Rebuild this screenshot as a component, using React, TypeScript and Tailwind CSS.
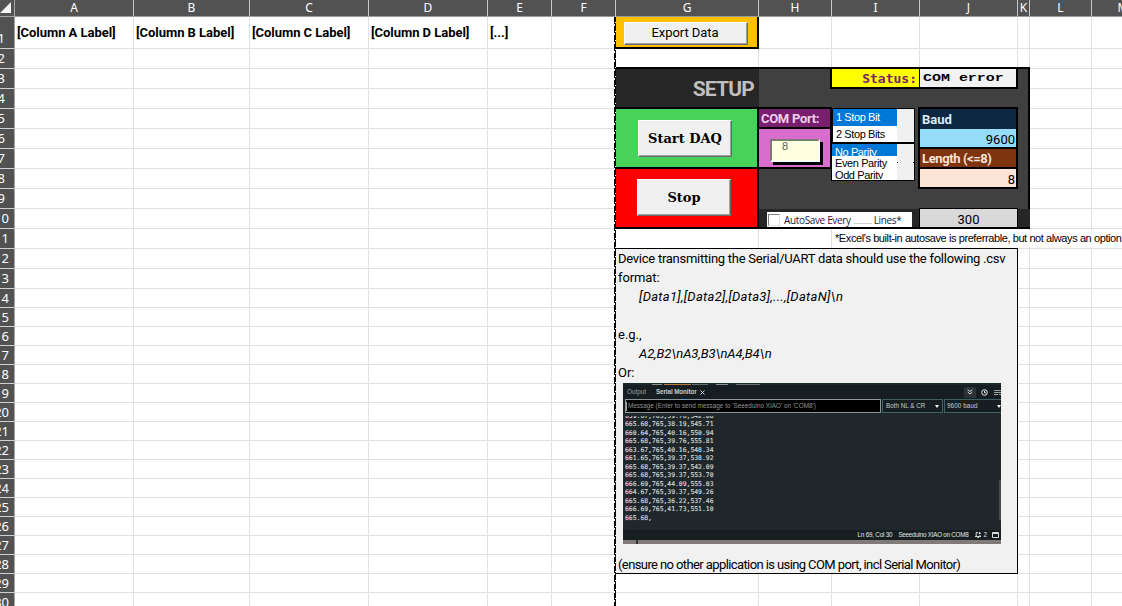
import React from "react";

const COLS = ["A", "B", "C", "D", "E", "F", "G", "H", "I", "J", "K", "L", "M"];
const ROWS = Array.from({ length: 30 }, (_, i) => i + 1);
const LABELS = ["[Column A Label]", "[Column B Label]", "[Column C Label]", "[Column D Label]", "[...]"];
const LOG = [
  "665.68,765,38.19,545.71",
  "660.64,765,40.16,550.94",
  "665.68,765,39.76,555.81",
  "663.67,765,40.16,548.34",
  "661.65,765,39.37,538.92",
  "665.68,765,39.37,542.09",
  "665.68,765,39.37,553.70",
  "666.69,765,44.09,555.03",
  "664.67,765,39.37,549.26",
  "665.68,765,36.22,537.46",
  "666.69,765,41.73,551.10",
  "665.68,",
];

const tracks =
  "col-start-1 row-start-1 grid grid-cols-[15px_119px_116px_119px_119px_64px_64px_143px_73px_88px_98px_12px_62px_63px] grid-rows-[17px_32px_repeat(12,20px)_repeat(17,19px)]";

const raised =
  "flex items-center justify-center border border-t-white border-l-white border-r-[#696969] border-b-[#696969] bg-[#f0f0f0] shadow-[inset_-1px_-1px_0_#a0a0a0] whitespace-nowrap text-black";

function Sheet() {
  return (
    <div className={tracks}>
      <div className="flex items-end justify-end border-r border-b border-[#a6a6a6] bg-[#525252] pr-[3px] pb-[3px]">
        <svg width="11" height="11" viewBox="0 0 11 11">
          <path d="M11 0V11H0Z" fill="#f5f5f5" />
        </svg>
      </div>
      {COLS.map((c) => (
        <div
          key={c}
          className="flex items-center justify-center overflow-hidden border-r border-b border-r-[#c6c6c6] border-b-[#9a9a9a] bg-[#525252] font-['Noto_Sans',sans-serif] text-[12px] leading-none text-white"
        >
          {c}
        </div>
      ))}
      {ROWS.map((r) => (
        <React.Fragment key={r}>
          <div
            className={
              "flex justify-end overflow-hidden border-r border-b border-r-[#a6a6a6] border-b-[#d0d0d0] bg-[#525252] font-['Noto_Sans',sans-serif] text-[13px] leading-[19px] text-white " +
              (r === 1 ? "items-end pr-[9px]" : r < 10 ? "items-center pr-[9px]" : "items-center pr-[5px]")
            }
          >
            {r}
          </div>
          {COLS.map((c, i) => (
            <div
              key={c}
              className="flex items-center border-r border-b border-[#e0e0e0] bg-white pl-[2px] font-[Roboto,sans-serif] text-[13px] font-bold tracking-[-0.04px] whitespace-nowrap text-black"
            >
              {r === 1 ? LABELS[i] : null}
            </div>
          ))}
        </React.Fragment>
      ))}
    </div>
  );
}

function SetupPanel() {
  return (
    <div className="col-start-8 col-end-13 row-start-4 row-end-12 grid grid-cols-[143px_73px_88px_98px_12px] grid-rows-[repeat(8,20px)] border-r-2 border-b-2 border-black bg-[#404040]">
      <div className="col-start-1 row-span-2 row-start-1 flex items-center justify-end border-b-2 border-black bg-[#262626] pt-[4px] pr-[5px] font-[Roboto,sans-serif] text-[21px] font-bold tracking-[-0.8px] text-[#bfbfbf]">
        SETUP
      </div>
      <div className="col-start-1 row-start-3 row-span-3 border-r-2 border-b-2 border-black bg-[#47d359] pt-[11px] pl-[22px]">
        <button className={raised + " h-[37px] w-[94px] font-['DejaVu_Serif',serif] text-[13px] font-bold"}>Start DAQ</button>
      </div>
      <div className="col-start-1 row-start-6 row-span-3 h-[58px] border-r-2 border-black bg-[#ff0000] pt-[10px] pl-[21px]">
        <button className={raised + " h-[37px] w-[94px] font-['DejaVu_Serif',serif] text-[13px] font-bold"}>Stop</button>
      </div>

      <div className="col-start-2 row-start-3 mt-[-2px] flex items-center border-t-2 border-r-2 border-b-2 border-black bg-[#78206e] pt-[2px] pl-[2px] font-[Roboto,sans-serif] text-[13px] font-bold tracking-[-0.3px] whitespace-nowrap text-[#f2ceef]">
        COM Port:
      </div>
      <div className="col-start-2 row-start-4 row-span-2 border-r-2 border-b-2 border-black bg-[#d86dcd] pt-[10px] pl-[11px]">
        <div className="h-[23px] w-[50px] border-2 border-t-[#7a7a70] border-r-white border-b-white border-l-[#7a7a70] bg-[#ffffe1] pl-[10px] font-['Liberation_Sans',sans-serif] text-[11px] leading-[11px] text-[#606060] shadow-[3px_3px_0_#000]">
          8
        </div>
      </div>

      <div className="col-start-2 col-end-6 row-start-8 h-[18px] bg-[#262626]" />
      <div className="z-10 col-start-2 col-end-4 row-start-8 mt-[3px] ml-[8px] flex h-[15px] w-[145px] items-center bg-white font-['Open_Sans',sans-serif] text-[10px] tracking-[-0.35px] whitespace-nowrap text-[#1b1b3a]">
        <span className="ml-[1px] h-[12px] w-[12px] border border-t-[#808080] border-l-[#808080] border-r-[#e0e0e0] border-b-[#e0e0e0]" />
        <span className="ml-[4px] pt-[2px]">AutoSave Every</span>
        <span className="mt-[7px] ml-[3px] w-[18px] border-b border-[#d0d0d0]" />
        <span className="ml-[2px] pt-[2px]">Lines*</span>
      </div>

      <div className="col-start-3 row-start-1 -ml-[2px] flex items-center justify-end border-b-2 border-l-2 border-black bg-[#ffff00] pt-[2px] pr-[3px] font-['DejaVu_Sans_Mono',monospace] text-[13px] font-bold text-[#782170]">
        Status:
      </div>
      <div className="col-start-4 row-start-1 -ml-px flex items-center overflow-hidden border-r-2 border-b-2 border-l border-black bg-[#f2f2f2] pl-[3px] font-['Liberation_Mono',monospace] text-[11.5px] font-bold text-black">
        <span className="origin-left scale-x-130 whitespace-nowrap">COM error</span>
      </div>

      <div className="col-start-3 row-start-3 row-span-4 -mt-px -ml-px flex w-[84px] flex-col font-['Liberation_Sans',sans-serif] text-[11px] tracking-[-0.4px] whitespace-nowrap text-black">
        <div className="ml-[1px] flex h-[35px] w-[83px] border border-black bg-white">
          <div className="w-[64px]">
            <div className="h-[17px] bg-[#0078d7] pl-[3px] leading-[17px] text-white">1 Stop Bit</div>
            <div className="pl-[3px] leading-[16px]">2 Stop Bits</div>
          </div>
          <div className="flex-1 bg-[#f0f0f0]" />
        </div>
        <div className="flex h-[38px] w-[84px] overflow-hidden border border-black bg-white">
          <div className="w-[65px]">
            <div className="h-[12px] overflow-hidden bg-[#0078d7] pl-[3px] leading-[17px] text-white">No Parity</div>
            <div className="h-[13px] pl-[3px] leading-[15px]">Even Parity</div>
            <div className="h-[10px] overflow-hidden pl-[3px] leading-[13px]">Odd Parity</div>
          </div>
          <div className="flex flex-1 items-center justify-between bg-[#f0f0f0]">
            <span className="h-px w-px bg-black" />
            <span className="h-px w-px bg-black" />
          </div>
        </div>
      </div>

      <div className="col-start-4 row-start-3 row-span-4 -mt-[2px] -ml-[2px] grid grid-rows-[20px_20px_20px_20px] border-t-2 border-r-2 border-l-2 border-black font-[Roboto,sans-serif] text-[13px] text-black">
        <div className="flex items-center bg-[#0e2841] pt-[2px] pl-[2px] font-bold text-[#dceaf7]">Baud</div>
        <div className="flex items-center justify-end border-b-2 border-black bg-[#94dcf8] pr-px pt-[3px]">9600</div>
        <div className="flex items-center border-b-2 border-black bg-[#7e350e] pt-[2px] pl-[2px] font-bold tracking-[-0.4px] text-[#fbe3d6]">
          Length (&lt;=8)
        </div>
        <div className="flex items-center justify-end border-b-2 border-black bg-[#fbe3d6] pr-px pt-[3px]">8</div>
      </div>
      <div className="col-start-4 row-start-8 -mt-px -ml-px flex h-[19px] items-center justify-center border border-b-0 border-black bg-[#d9d9d9] pt-[3px] font-[Roboto,sans-serif] text-[13px] text-black">
        300
      </div>
    </div>
  );
}

function SerialMonitor() {
  return (
    <div className="ml-[7px] flex h-[161px] w-[378px] shrink-0 flex-col overflow-hidden bg-[#1f272a] font-['Liberation_Sans',sans-serif] text-[6.3px] leading-none whitespace-nowrap text-[#c4cccc]">
      <div className="flex h-[2px] shrink-0 items-center bg-[#1a2a2c] pl-[29px]">
        <span className="h-px w-[10px] bg-[#8a9292]" />
        <span className="ml-[2px] h-px w-[27px] bg-[#b87a3c]" />
        <span className="ml-px h-px w-[16px] bg-[#657070]" />
        <span className="ml-[8px] h-px w-[12px] bg-[#8a9292]" />
        <span className="ml-[8px] h-px w-[24px] bg-[#657070]" />
      </div>
      <div className="flex h-[14px] shrink-0 items-center bg-[#171e21] pl-[4px]">
        <span className="w-[29px] text-[#98a0a2]">Output</span>
        <span className="w-[44px] font-bold tracking-[-0.1px]">Serial Monitor</span>
        <svg width="5" height="5" viewBox="0 0 5 5" stroke="#e0e5e5" strokeWidth=".9">
          <path d="M.5 .5L4.5 4.5M4.5 .5L.5 4.5" />
        </svg>
        <span className="ml-auto flex h-[11px] w-[12px] items-center justify-center bg-[#2b3235]">
          <svg width="6" height="6" viewBox="0 0 6 6" stroke="#d5dada" fill="none">
            <path d="M.7 .7L3 2.5L5.3 .7M.7 3L3 5L5.3 3" />
          </svg>
        </span>
        <svg className="ml-[5px]" width="7" height="7" viewBox="0 0 7 7" stroke="#e8eded" fill="none">
          <circle cx="3.5" cy="3.5" r="2.8" />
          <path d="M3.5 1.8V3.8H5" />
        </svg>
        <svg className="ml-[6px]" width="7" height="7" viewBox="0 0 7 7" stroke="#99a2a2">
          <path d="M0 1.5H7M0 3.5H7M0 5.5H4M5 5.5H7" />
        </svg>
      </div>
      <div className="flex h-[14px] shrink-0 gap-px bg-[#171e21] pl-[2px]">
        <div className="flex w-[256px] shrink-0 items-center border border-[#8b9696] bg-black tracking-[0.04px] text-[#949494]">
          <span className="mr-px h-[9px] w-px bg-[#aaa]" />
          Message (Enter to send message to 'Seeeduino XIAO' on 'COM8')
        </div>
        <div className="flex w-[61px] shrink-0 items-center border border-[#3c6266] pl-[3px]">
          Both NL &amp; CR
          <span className="mr-[3px] ml-auto border-x-2 border-t-[3px] border-x-transparent border-t-white" />
        </div>
        <div className="flex flex-1 items-center border border-r-0 border-[#3c6266] pl-[2px]">
          <span className="tracking-[0.1px]">9600 baud</span>
          <span className="ml-auto border-x-2 border-t-[3px] border-x-transparent border-t-white" />
        </div>
      </div>
      <div className="flex min-h-0 flex-1 pt-[3px] pl-[2px]">
        <div className="flex flex-1 flex-col font-['DejaVu_Sans_Mono',monospace] text-[6.4px] text-[#d4dada] [-webkit-text-stroke:0.15px_#d4dada]">
          <div className="flex h-[4px] shrink-0 items-end overflow-hidden leading-[7px]">659.67,765,39.76,542.08</div>
          {LOG.map((l, i) => (
            <div key={i} className="h-[8.5px] shrink-0 leading-[9.5px]">
              {l}
            </div>
          ))}
        </div>
        <span className="mt-[64px] h-[40px] w-[2px] bg-[#454c4e]" />
      </div>
      <div className="flex h-[10px] shrink-0 items-center justify-end bg-[#171e21] pr-[2px] text-[#e0e4e4]">
        <span className="tracking-[-0.2px]">Ln 69, Col 30</span>
        <span className="ml-[6px] tracking-[-0.25px]">Seeeduino XIAO on COM8</span>
        <svg className="ml-[7px]" width="6" height="6" viewBox="0 0 6 6" stroke="#d5dada" fill="none">
          <path d="M3 .5H1.2V4.5H5V3M0 4.5H6M2.5 5.5H4" />
          <circle cx="4.7" cy="1.3" r="1" fill="#fff" stroke="none" />
        </svg>
        <span className="ml-[2px]">2</span>
        <svg className="ml-[5px]" width="7" height="6" viewBox="0 0 7 6" stroke="#d5dada" fill="none">
          <path d="M.5 .5H6.5V5.5H.5ZM.5 1.5H6.5" />
        </svg>
      </div>
      <div className="flex h-[4px] shrink-0 bg-[#807b79] pl-[13px]">
        <span className="w-[2px] bg-[#333]" />
      </div>
    </div>
  );
}

function Notes() {
  return (
    <div className="col-start-8 col-end-12 row-start-13 row-end-30 -mt-px flex flex-col overflow-hidden border-t border-r border-b border-black bg-[#f1f1f1] font-[Roboto,sans-serif] text-[13px] leading-[19px] whitespace-nowrap text-black">
      <div className="flex h-[134px] shrink-0 flex-col pl-[2px]">
        <p className="tracking-[-0.26px]">Device transmitting the Serial/UART data should use the following .csv</p>
        <p className="tracking-[-0.1px]">format:</p>
        <p className="pl-[21px] tracking-[0.29px] italic">[Data1],[Data2],[Data3],...,[DataN]\n</p>
        <p className="h-[19px]" />
        <p>e.g.,</p>
        <p className="pl-[21px] tracking-[-0.1px] italic">A2,B2\nA3,B3\nA4,B4\n</p>
        <p>Or:</p>
      </div>
      <SerialMonitor />
      <p className="pt-[11px] pl-[2px] tracking-[-0.6px]">(ensure no other application is using COM port, incl Serial Monitor)</p>
    </div>
  );
}

export default function App() {
  return (
    <main className="grid h-[606px] w-[1122px] grid-cols-[1155px] content-start overflow-hidden bg-white">
      <Sheet />
      <div className={tracks}>
        <div className="col-start-8 row-start-2 border-r-2 border-b-2 border-black bg-[#ffc000] pt-[5px] pl-[8px]">
          <button className={raised + " h-[23px] w-[124px] pr-[2px] pb-[2px] font-[Roboto,sans-serif] text-[13px] tracking-[-0.05px]"}>Export Data</button>
        </div>
        <div className="col-start-8 col-end-13 row-start-3 self-end border-b-2 border-black" />
        <SetupPanel />
        <div className="col-start-10 col-end-15 row-start-12 mr-[33px] flex h-[19px] items-center pl-[3px] font-['Liberation_Sans',sans-serif] text-[11px] tracking-[-0.41px] whitespace-nowrap text-black">
          <span className="bg-white">*Excel's built-in autosave is preferrable, but not always an option</span>
        </div>
        <Notes />
        <div className="z-10 col-start-8 row-start-2 row-end-32 -ml-[2px] flex w-[2px]">
          <span className="w-px bg-[repeating-linear-gradient(180deg,#000_0px,#000_7px,#fff_7px,#fff_9px)]" />
          <span className="w-px bg-[repeating-linear-gradient(180deg,#000_0px,#000_5px,#fff_5px,#fff_6px,#000_6px,#000_9px)]" />
        </div>
      </div>
    </main>
  );
}
